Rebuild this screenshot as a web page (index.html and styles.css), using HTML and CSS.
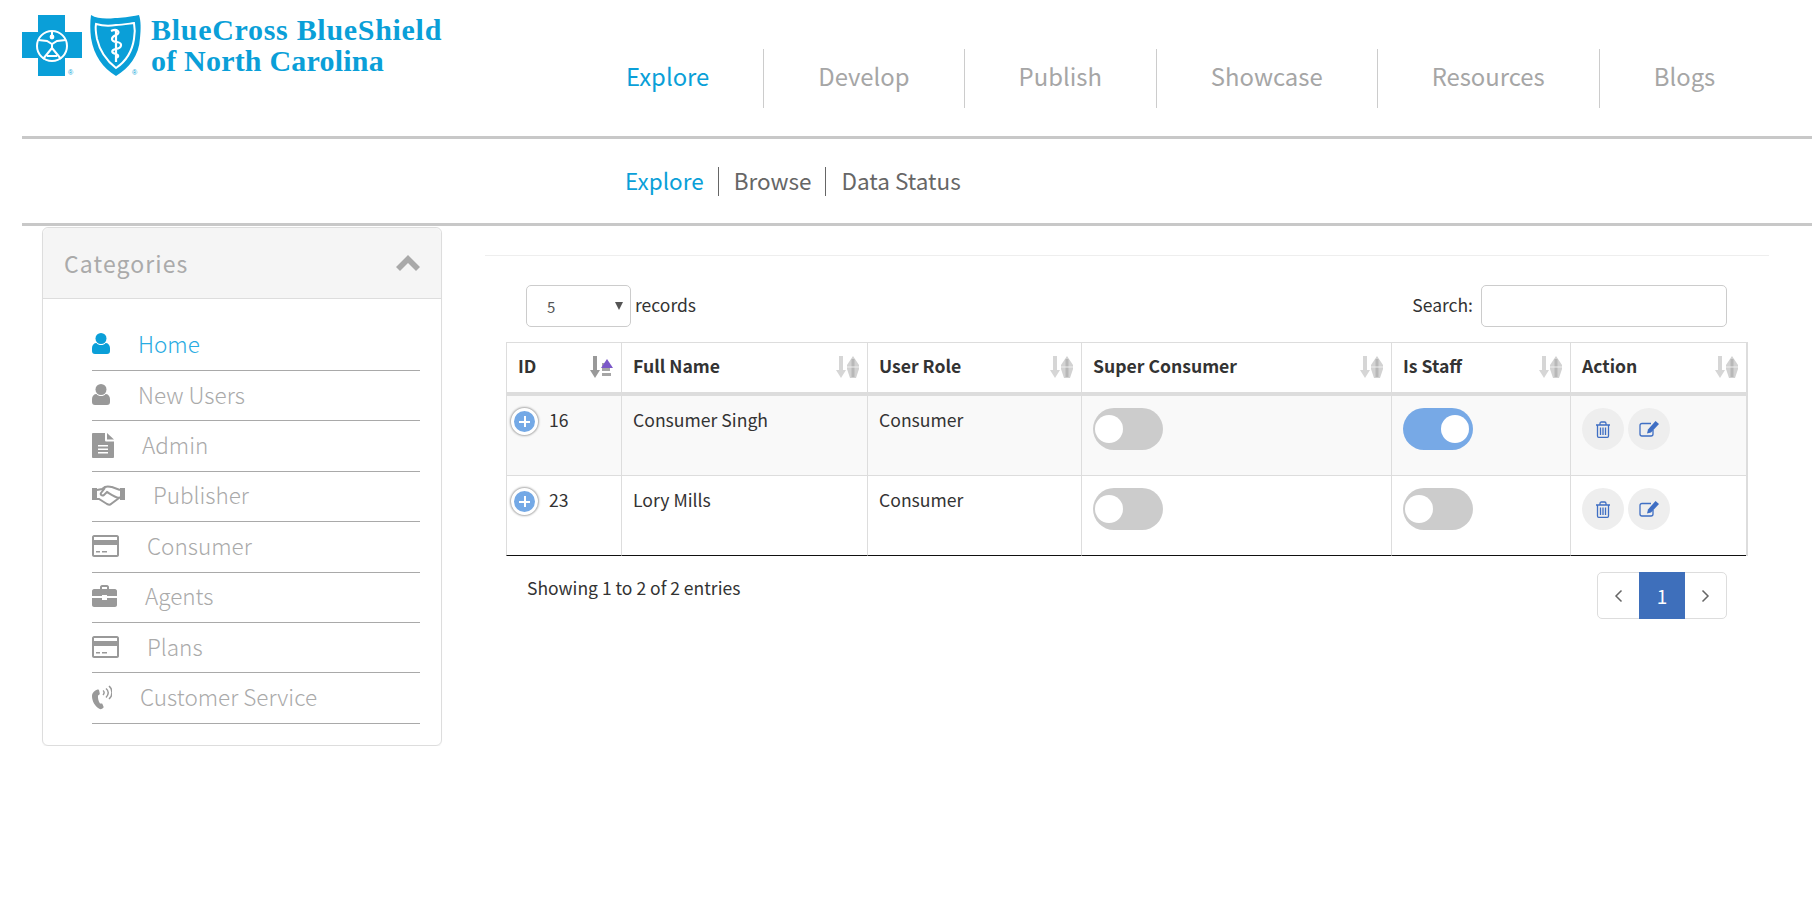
FILE: index.html
```html
<!DOCTYPE html>
<html lang="en">
<head>
    <meta charset="UTF-8">
    <title>BlueCross BlueShield of North Carolina</title>
    <link rel="stylesheet" href="styles.css">
</head>
<body>
    <header class="topbar">
        <a class="logo" href="#">
            <svg class="logo-mark" width="120" height="62" viewBox="0 0 120 62">
                <path fill="#0a9fd8" d="M16 0h27v17h17v26H43v18H16V43H0V17h16z"/>
                <g fill="none" stroke="#fff" stroke-width="2">
                    <circle cx="30" cy="31" r="15"/>
                    <path d="M16 25l9 1 5 3 5-3 9-1M30 29v4M30 33l-9 11M30 33l9 11M25 41h10M30 16v4"/>
                </g>
                <circle cx="30" cy="22" r="2.400" fill="#fff"/>
                <text class="logo-r" x="46" y="60">®</text>
                <path fill="#0a9fd8" d="M69 0c6 4 16 4 24 3 7 0 14-1 24-3 2 6 2 14 1 23-1 18-11 30-24 38C81 53 72 41 69 23c-1-8-1-16 0-23z"/>
                <path fill="none" stroke="#fff" stroke-width="2" d="M74 9c7 2 14 2 20 1 6 0 11-1 18-2 1 5 1 10 0 16-2 13-9 23-18 29-9-7-16-16-19-29-1-5-2-10-1-15z"/>
                <path fill="none" stroke="#fff" stroke-width="2.200" d="M94 14v33M89 16c7-3 10 2 5 4-5 2-6 6 1 7 6 1 5 6-1 7-5 1-5 4 0 5 3 1 3 3 0 4"/>
                <text class="logo-r" x="110" y="60">®</text>
            </svg>
            <span class="logo-text">
                <span class="logo-line-one">BlueCross BlueShield</span>
                <span class="logo-line-two">of North Carolina</span>
            </span>
        </a>
        <nav class="main-nav">
            <a class="active" href="#">Explore</a>
            <a href="#">Develop</a>
            <a href="#">Publish</a>
            <a href="#">Showcase</a>
            <a href="#">Resources</a>
            <a href="#">Blogs</a>
        </nav>
    </header>

    <div class="subbar">
        <nav class="sub-nav">
            <a class="active" href="#">Explore</a>
            <a href="#">Browse</a>
            <a href="#">Data Status</a>
        </nav>
    </div>

    <div class="page">
        <aside class="card">
            <div class="card-head">
                <span class="card-title">Categories</span>
                <svg width="24" height="16" viewBox="0 0 24 16"><path fill="#a9a9a9" d="M12 0l12 12-4 4-8-8-8 8-4-4z"/></svg>
            </div>
            <ul class="cat-list">
                <li class="active">
                    <svg class="cat-icon" width="18" height="22" viewBox="0 0 18 22"><circle cx="9" cy="5.500" r="5.500"/><path d="M0 18v-3c0-3 2-5 4.500-5 1 1.500 2.500 2 4.500 2s3.500-.5 4.500-2c2.500 0 4.500 2 4.500 5v3c0 2-1 3-3 3H3c-2 0-3-1-3-3z"/></svg>
                    <a href="#">Home</a>
                </li>
                <li>
                    <svg class="cat-icon" width="18" height="22" viewBox="0 0 18 22"><circle cx="9" cy="5.500" r="5.500"/><path d="M0 18v-3c0-3 2-5 4.500-5 1 1.500 2.500 2 4.500 2s3.500-.5 4.500-2c2.500 0 4.500 2 4.500 5v3c0 2-1 3-3 3H3c-2 0-3-1-3-3z"/></svg>
                    <a href="#">New Users</a>
                </li>
                <li>
                    <svg class="cat-icon" width="22" height="25" viewBox="0 0 22 25"><path fill-rule="evenodd" d="M1 0h12v7c0 1 .5 1.500 1.500 1.500H22V24c0 .5-.5 1-1 1H1c-.5 0-1-.5-1-1V1c0-.5.5-1 1-1zm5 12v1.500h10V12zm0 3.500V17h10v-1.500zm0 3.500v1.500h10V19z"/><path d="M15 0l7 6.500h-7z"/></svg>
                    <a href="#">Admin</a>
                </li>
                <li>
                    <svg class="cat-icon" width="33" height="21" viewBox="0 0 33 21"><path d="M0 3h5v12H0zM28 3h5v12h-5z"/><path fill="none" stroke="currentColor" stroke-width="2" d="M5 5l5-1 3-2c3-1 5 0 7 0l8 3M5 14l2 0 8 5c2 1 3 1 4 0l8-6 1-1M13 3L9 8c-1 2 1 3 3 2l3-3c2 1 7 5 12 6"/></svg>
                    <a href="#">Publisher</a>
                </li>
                <li>
                    <svg class="cat-icon" width="27" height="22" viewBox="0 0 27 22"><path fill-rule="evenodd" d="M2 0h23c1 0 2 1 2 2v18c0 1-1 2-2 2H2c-1 0-2-1-2-2V2C0 1 1 0 2 0zm0 2v3h23V2zm0 8v10h23V10z"/><path d="M4 16h4v1.500H4zM10 16h5v1.500h-5z"/></svg>
                    <a href="#">Consumer</a>
                </li>
                <li>
                    <svg class="cat-icon" width="25" height="22" viewBox="0 0 25 22"><path fill-rule="evenodd" d="M8 4V2c0-1 1-2 2-2h5c1 0 2 1 2 2v2h6c1 0 2 1 2 2v5H15v-1h-5v1H0V6c0-1 1-2 2-2zm2 0h5V2h-5z"/><path d="M0 13h10v2h5v-2h10v7c0 1-1 2-2 2H2c-1 0-2-1-2-2z"/></svg>
                    <a href="#">Agents</a>
                </li>
                <li>
                    <svg class="cat-icon" width="27" height="22" viewBox="0 0 27 22"><path fill-rule="evenodd" d="M2 0h23c1 0 2 1 2 2v18c0 1-1 2-2 2H2c-1 0-2-1-2-2V2C0 1 1 0 2 0zm0 2v3h23V2zm0 8v10h23V10z"/><path d="M4 16h4v1.500H4zM10 16h5v1.500h-5z"/></svg>
                    <a href="#">Plans</a>
                </li>
                <li>
                    <svg class="cat-icon" width="20" height="25" viewBox="0 0 20 25"><path d="M5.500 4.500c.8-.3 1.500.3 1.700 1.200l.6 3c.1.800-1.300 1.300-1.800 1.800-.3 2.500.5 6 2 8 .6.200 1.800-.4 2.300.2l1.200 2.700c.3.900-.3 1.700-1.200 2.200-.9.500-2 .8-3 .2C3 21.500 0 16 0 11c0-3 2.500-5.500 5.500-6.500z"/><path fill="none" stroke="currentColor" stroke-width="1.500" d="M11 5.500c1.500 1 1.500 3 0 4.500M14 3.500c3 2.500 3 6 0 9M17 1c4 3.500 4 9.500 0 13"/></svg>
                    <a href="#">Customer Service</a>
                </li>
            </ul>
        </aside>

        <main class="content">
            <hr class="content-rule">
            <div class="table-wrap">
                <div class="controls">
                    <label class="ctrl-label">
                        <span class="select-box">
                            <select>
                                <option>5</option>
                                <option>10</option>
                                <option>25</option>
                            </select>
                        </span>
                        <span class="ctrl-text">records</span>
                    </label>
                    <label class="ctrl-label">
                        <span class="ctrl-text">Search:</span>
                        <input class="search-input" type="text">
                    </label>
                </div>

                <table class="users">
                    <colgroup>
                        <col class="col-id"><col class="col-name"><col class="col-role"><col class="col-super"><col class="col-staff"><col class="col-action">
                    </colgroup>
                    <thead>
                        <tr>
                            <th><div class="th-in">ID
                                <svg class="sort" width="23" height="22" viewBox="0 0 23 22"><path fill="#999" d="M3 0h4v14h3l-5 8-5-8h3z"/><path fill="#a5a5a5" d="M12 7h7v3h-7zM12 12h8v3h-8zM12 17h9v3h-9z"/><path fill="#7b58c8" d="M17 3l6 9H11z"/></svg>
                            </div></th>
                            <th><div class="th-in">Full Name
                                <svg class="sort" width="23" height="22" viewBox="0 0 23 22"><path fill="#d6d6d6" d="M3 0h4v14h3l-5 8-5-8h3z"/><path fill="#d2d2d2" d="M17 0l6 9v4l-3 9h-6l-3-9V9z"/><path fill="#b8b8b8" d="M15.500 3h3v18h-3z"/><path fill="#eee" d="M11 10.500h12v1H11z"/></svg>
                            </div></th>
                            <th><div class="th-in">User Role
                                <svg class="sort" width="23" height="22" viewBox="0 0 23 22"><path fill="#d6d6d6" d="M3 0h4v14h3l-5 8-5-8h3z"/><path fill="#d2d2d2" d="M17 0l6 9v4l-3 9h-6l-3-9V9z"/><path fill="#b8b8b8" d="M15.500 3h3v18h-3z"/><path fill="#eee" d="M11 10.500h12v1H11z"/></svg>
                            </div></th>
                            <th><div class="th-in">Super Consumer
                                <svg class="sort" width="23" height="22" viewBox="0 0 23 22"><path fill="#d6d6d6" d="M3 0h4v14h3l-5 8-5-8h3z"/><path fill="#d2d2d2" d="M17 0l6 9v4l-3 9h-6l-3-9V9z"/><path fill="#b8b8b8" d="M15.500 3h3v18h-3z"/><path fill="#eee" d="M11 10.500h12v1H11z"/></svg>
                            </div></th>
                            <th><div class="th-in">Is Staff
                                <svg class="sort" width="23" height="22" viewBox="0 0 23 22"><path fill="#d6d6d6" d="M3 0h4v14h3l-5 8-5-8h3z"/><path fill="#d2d2d2" d="M17 0l6 9v4l-3 9h-6l-3-9V9z"/><path fill="#b8b8b8" d="M15.500 3h3v18h-3z"/><path fill="#eee" d="M11 10.500h12v1H11z"/></svg>
                            </div></th>
                            <th><div class="th-in">Action
                                <svg class="sort" width="23" height="22" viewBox="0 0 23 22"><path fill="#d6d6d6" d="M3 0h4v14h3l-5 8-5-8h3z"/><path fill="#d2d2d2" d="M17 0l6 9v4l-3 9h-6l-3-9V9z"/><path fill="#b8b8b8" d="M15.500 3h3v18h-3z"/><path fill="#eee" d="M11 10.500h12v1H11z"/></svg>
                            </div></th>
                        </tr>
                    </thead>
                    <tbody>
                        <tr class="odd">
                            <td class="id-cell"><div class="id-in"><span class="expand"></span>16</div></td>
                            <td>Consumer Singh</td>
                            <td>Consumer</td>
                            <td><span class="toggle"></span></td>
                            <td><span class="toggle on"></span></td>
                            <td>
                                <div class="actions">
                                    <button class="round-btn" type="button">
                                        <svg width="16" height="17" viewBox="0 0 16 17" fill="none" stroke="#3f6fc4" stroke-width="1.300"><path d="M1 4h14M5 4V2.500C5 1.500 5.500 1 6.500 1h3c1 0 1.500.5 1.500 1.500V4M2.500 4v11c0 .8.500 1.300 1.200 1.300h8.600c.7 0 1.200-.5 1.200-1.300V4M5.500 6.500v7.500M8 6.500v7.500M10.500 6.500v7.500"/></svg>
                                    </button>
                                    <button class="round-btn" type="button">
                                        <svg width="20" height="16" viewBox="0 0 20 16" fill="none" stroke="#3f6fc4" stroke-width="1.300"><path d="M12 2.500H3C1.800 2.500 1 3.300 1 4.500v8.500c0 1.200.8 2 2 2h9c1.200 0 2-.8 2-2V9"/><path fill="#3f6fc4" stroke="none" d="M16.500 0L20 3 12 11.500 8 12.500 9 8.500z"/></svg>
                                    </button>
                                </div>
                            </td>
                        </tr>
                        <tr>
                            <td class="id-cell"><div class="id-in"><span class="expand"></span>23</div></td>
                            <td>Lory Mills</td>
                            <td>Consumer</td>
                            <td><span class="toggle"></span></td>
                            <td><span class="toggle"></span></td>
                            <td>
                                <div class="actions">
                                    <button class="round-btn" type="button">
                                        <svg width="16" height="17" viewBox="0 0 16 17" fill="none" stroke="#3f6fc4" stroke-width="1.300"><path d="M1 4h14M5 4V2.500C5 1.500 5.500 1 6.500 1h3c1 0 1.500.5 1.500 1.500V4M2.500 4v11c0 .8.500 1.300 1.200 1.300h8.600c.7 0 1.200-.5 1.200-1.300V4M5.500 6.500v7.500M8 6.500v7.500M10.500 6.500v7.500"/></svg>
                                    </button>
                                    <button class="round-btn" type="button">
                                        <svg width="20" height="16" viewBox="0 0 20 16" fill="none" stroke="#3f6fc4" stroke-width="1.300"><path d="M12 2.500H3C1.800 2.500 1 3.300 1 4.500v8.500c0 1.200.8 2 2 2h9c1.200 0 2-.8 2-2V9"/><path fill="#3f6fc4" stroke="none" d="M16.500 0L20 3 12 11.500 8 12.500 9 8.500z"/></svg>
                                    </button>
                                </div>
                            </td>
                        </tr>
                    </tbody>
                </table>

                <div class="table-foot">
                    <span class="info">Showing 1 to 2 of 2 entries</span>
                    <div class="pager">
                        <a href="#"><svg width="9" height="14" viewBox="0 0 9 14" fill="none" stroke="#666" stroke-width="1.500"><path d="M7.500 1.500L2 7l5.500 5.500"/></svg></a>
                        <a class="current" href="#">1</a>
                        <a href="#"><svg width="9" height="14" viewBox="0 0 9 14" fill="none" stroke="#666" stroke-width="1.500"><path d="M1.500 1.500L7 7l-5.500 5.500"/></svg></a>
                    </div>
                </div>
            </div>
        </main>
    </div>
</body>
</html>
```

FILE: styles.css
```css
* {
    margin: 0;
    padding: 0;
    box-sizing: border-box;
}

body {
    font-family: "Noto Sans CJK SC", "Noto Sans", sans-serif;
    background-color: #fff;
    color: #333;
}

a {
    text-decoration: none;
}

/* top header */
.topbar {
    display: flex;
    height: 139px;
    margin-left: 22px;
    border-bottom: 3px solid #c8c8c8;
}

.logo {
    display: flex;
    width: 604px;
    padding-top: 15px;
    align-items: flex-start;
}

.logo-mark {
    flex: none;
}

.logo-r {
    font-family: "Liberation Sans", sans-serif;
    font-size: 7px;
    fill: #0a9fd8;
}

.logo-text {
    display: flex;
    flex-direction: column;
    margin: -1px 0 0 9px;
    font-family: "Liberation Serif", serif;
    font-size: 30px;
    font-weight: bold;
    line-height: 31px;
    color: #0a9fd8;
}

.logo-line-one {
    letter-spacing: 0.7px;
}

.logo-line-two {
    letter-spacing: 0.2px;
}

.main-nav {
    display: flex;
    height: 59px;
    margin-top: 49px;
}

.main-nav a {
    padding: 0 54px;
    border-right: 1px solid #ccc;
    font-size: 23.85px;
    line-height: 54px;
    color: #a6a6a6;
}

.main-nav a:first-child {
    padding-left: 0;
}

.main-nav a:last-child {
    border-right: none;
}

.main-nav a.active,
.sub-nav a.active {
    color: #0a9fd8;
}

/* second row */
.subbar {
    display: flex;
    align-items: center;
    height: 87px;
    margin-left: 22px;
    padding-left: 603px;
    border-bottom: 3px solid #c8c8c8;
}

.sub-nav {
    display: flex;
}

.sub-nav a {
    height: 29px;
    padding: 0 14px 0 15px;
    border-right: 1px solid #666;
    font-size: 22.5px;
    line-height: 27px;
    color: #666;
}

.sub-nav a:first-child {
    padding-left: 0;
}

.sub-nav a:last-child {
    border-right: none;
}

/* page body */
.page {
    display: flex;
    align-items: flex-start;
}

.card {
    flex: none;
    width: 400px;
    height: 519px;
    margin: 1px 0 0 42px;
    border: 1px solid #ddd;
    border-radius: 6px;
    box-shadow: 0 1px 1px rgba(0, 0, 0, 0.05);
}

.card-head {
    display: flex;
    align-items: center;
    justify-content: space-between;
    height: 71px;
    padding: 0 21px;
    background-color: #f5f5f5;
    border-bottom: 1px solid #ddd;
    border-radius: 6px 6px 0 0;
    color: #aaa;
}

.card-title {
    font-size: 23px;
    letter-spacing: 1.1px;
}

.cat-list {
    list-style: none;
    margin: 21.6px 21px 0 49px;
}

.cat-list li {
    display: flex;
    align-items: center;
    height: 50.4px;
    padding-bottom: 2px;
    border-bottom: 1px solid #a9a9a9;
    color: #999;
}

.cat-icon {
    flex: none;
    margin-right: 28px;
    fill: currentColor;
}

.cat-list a {
    padding-bottom: 2px;
    font-family: "Noto Sans CJK SC Light", "Noto Sans CJK SC", sans-serif;
    font-size: 22.5px;
    font-weight: 300;
    color: #aaa;
}

.cat-list li.active {
    color: #0a9fd8;
}

.cat-list li.active a {
    color: #29abe2;
}

/* right side */
.content {
    width: 1284px;
    margin-left: 43px;
}

.content-rule {
    margin-top: 29px;
    border: none;
    border-top: 1px solid #eee;
}

.table-wrap {
    padding: 0 21px;
}

.controls {
    display: flex;
    align-items: center;
    justify-content: space-between;
    height: 42px;
    margin-top: 29px;
    padding: 0 21px 0 20px;
    font-size: 17.5px;
}

.ctrl-label {
    display: flex;
    align-items: center;
}

.ctrl-text {
    padding-bottom: 4px;
}

.select-box {
    position: relative;
    margin-right: 4px;
}

.select-box::after {
    content: "";
    position: absolute;
    top: 17px;
    right: 8px;
    border-left: 4px solid transparent;
    border-right: 4px solid transparent;
    border-top: 8px solid #555;
    pointer-events: none;
}

.select-box select {
    display: block;
    width: 105px;
    height: 42px;
    padding-left: 20px;
    appearance: none;
    background-color: #fff;
    border: 1px solid #ccc;
    border-radius: 5px;
    font-family: inherit;
    font-size: 15px;
    color: #555;
}

.search-input {
    width: 246px;
    height: 42px;
    margin-left: 8px;
    border: 1px solid #ccc;
    border-radius: 5px;
}

.users {
    width: 1242px;
    margin-top: 15px;
    table-layout: fixed;
    border-collapse: separate;
    border-spacing: 0;
    border-right: 2px solid #ddd;
    font-size: 17.6px;
}

.col-id { width: 115px; }
.col-name { width: 246px; }
.col-role { width: 214px; }
.col-super { width: 310px; }
.col-staff { width: 179px; }
.col-action { width: 176px; }

.users th,
.users td {
    border-left: 1px solid #ddd;
    text-align: left;
    vertical-align: top;
}

.users th {
    height: 54px;
    padding: 0 8px 5px 11px;
    border-top: 1px solid #ddd;
    border-bottom: 4px solid #ddd;
    vertical-align: middle;
    font-weight: bold;
}

.th-in {
    display: flex;
    align-items: center;
    justify-content: space-between;
}

.sort {
    margin-top: 3px;
}

.users td {
    height: 80px;
    padding: 12px 11px;
    border-bottom: 1px solid #ddd;
    line-height: 23px;
}

.users tr.odd td {
    background-color: #f9f9f9;
}

.users tbody tr:last-child td {
    border-bottom-color: #111;
}

.users td.id-cell {
    padding-left: 4px;
}

.id-in {
    display: flex;
    gap: 11px;
}

.expand {
    position: relative;
    width: 27px;
    height: 27px;
    background-color: #74a9e6;
    border: 3px solid #fff;
    border-radius: 50%;
    box-shadow: 0 0 2px 1px #aaa;
}

.expand::before,
.expand::after {
    content: "";
    position: absolute;
    background-color: #fff;
}

.expand::before {
    top: 9.500px;
    left: 5px;
    width: 11px;
    height: 2px;
}

.expand::after {
    top: 5px;
    left: 9.500px;
    width: 2px;
    height: 11px;
}

.toggle {
    display: flex;
    align-items: center;
    width: 70px;
    height: 42px;
    padding: 0 2px;
    background-color: #ccc;
    border-radius: 21px;
}

.toggle::before {
    content: "";
    width: 28px;
    height: 28px;
    background-color: #fff;
    border-radius: 50%;
}

.toggle.on {
    justify-content: flex-end;
    padding: 0 4px;
    background-color: #77a9e6;
}

.actions {
    display: flex;
    gap: 4px;
}

.round-btn {
    display: flex;
    align-items: center;
    justify-content: center;
    width: 42px;
    height: 42px;
    background-color: #eee;
    border: none;
    border-radius: 50%;
    cursor: pointer;
}

.table-foot {
    display: flex;
    align-items: flex-start;
    justify-content: space-between;
    padding: 16px 21px 0 21px;
}

.info {
    margin-top: 3px;
    font-size: 17.5px;
    line-height: 25px;
}

.pager {
    display: flex;
    height: 47px;
    border: 1px solid #ddd;
    border-radius: 5px;
}

.pager a {
    display: flex;
    align-items: center;
    justify-content: center;
    width: 41px;
}

.pager a.current {
    width: 46px;
    margin: -1px 0;
    background-color: #3e6fbb;
    font-size: 19px;
    color: #fff;
}
```
